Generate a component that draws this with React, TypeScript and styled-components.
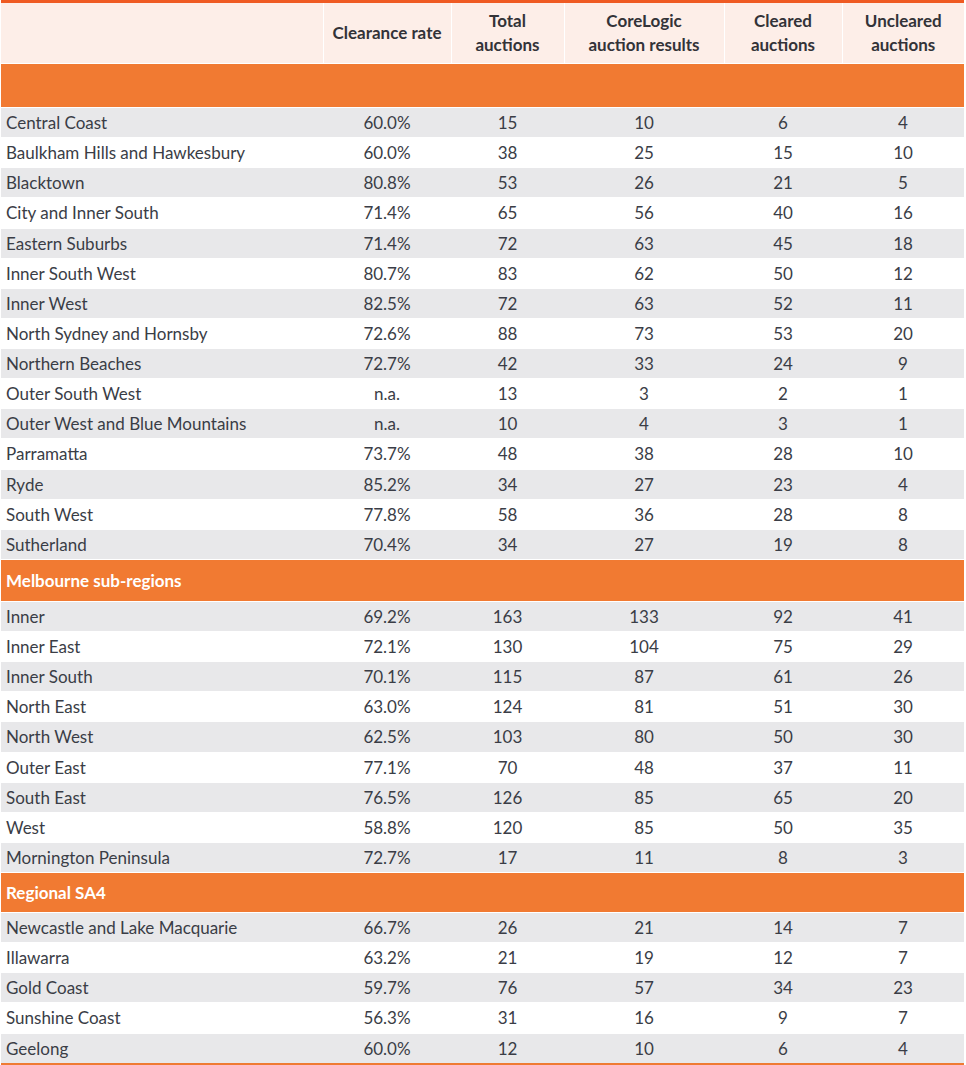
import React from "react";
import styled, { createGlobalStyle } from "styled-components";

const GlobalStyle = createGlobalStyle`
  html, body {
    margin: 0;
    padding: 0;
    background: #ffffff;
  }
  body {
    font-family: "Lato", "Liberation Sans", sans-serif;
  }
`;

type Row = [string, string, number, number, number, number];

type Section = {
  title: string;
  tall: number;
  rows: Row[];
};

const sections: Section[] = [
  {
    title: "",
    tall: 43,
    rows: [
      ["Central Coast", "60.0%", 15, 10, 6, 4],
      ["Baulkham Hills and Hawkesbury", "60.0%", 38, 25, 15, 10],
      ["Blacktown", "80.8%", 53, 26, 21, 5],
      ["City and Inner South", "71.4%", 65, 56, 40, 16],
      ["Eastern Suburbs", "71.4%", 72, 63, 45, 18],
      ["Inner South West", "80.7%", 83, 62, 50, 12],
      ["Inner West", "82.5%", 72, 63, 52, 11],
      ["North Sydney and Hornsby", "72.6%", 88, 73, 53, 20],
      ["Northern Beaches", "72.7%", 42, 33, 24, 9],
      ["Outer South West", "n.a.", 13, 3, 2, 1],
      ["Outer West and Blue Mountains", "n.a.", 10, 4, 3, 1],
      ["Parramatta", "73.7%", 48, 38, 28, 10],
      ["Ryde", "85.2%", 34, 27, 23, 4],
      ["South West", "77.8%", 58, 36, 28, 8],
      ["Sutherland", "70.4%", 34, 27, 19, 8],
    ],
  },
  {
    title: "Melbourne sub-regions",
    tall: 41,
    rows: [
      ["Inner", "69.2%", 163, 133, 92, 41],
      ["Inner East", "72.1%", 130, 104, 75, 29],
      ["Inner South", "70.1%", 115, 87, 61, 26],
      ["North East", "63.0%", 124, 81, 51, 30],
      ["North West", "62.5%", 103, 80, 50, 30],
      ["Outer East", "77.1%", 70, 48, 37, 11],
      ["South East", "76.5%", 126, 85, 65, 20],
      ["West", "58.8%", 120, 85, 50, 35],
      ["Mornington Peninsula", "72.7%", 17, 11, 8, 3],
    ],
  },
  {
    title: "Regional SA4",
    tall: 39,
    rows: [
      ["Newcastle and Lake Macquarie", "66.7%", 26, 21, 14, 7],
      ["Illawarra", "63.2%", 21, 19, 12, 7],
      ["Gold Coast", "59.7%", 76, 57, 34, 23],
      ["Sunshine Coast", "56.3%", 31, 16, 9, 7],
      ["Geelong", "60.0%", 12, 10, 6, 4],
    ],
  },
];

const Wrap = styled.div`
  width: 963px;
  padding-left: 1px;
`;

const Table = styled.table`
  width: 100%;
  border-collapse: collapse;
  table-layout: fixed;
  border-top: 3px solid #ef5a22;
  border-bottom: 3px solid #ef7b33;
  font-size: 17px;
  color: #3a3d46;
`;

const HeadCell = styled.th`
  background: #fdeee8;
  font-weight: 700;
  color: #333338;
  text-align: center;
  vertical-align: middle;
  line-height: 24px;
  height: 60px;
  padding: 0 2px;
  border-left: 1px solid #ffffff;
  white-space: nowrap;
  &:first-child {
    border-left: none;
  }
`;

const SectionCell = styled.td<{ $tall: number }>`
  background: #f17a32;
  color: #ffffff;
  font-weight: 700;
  height: ${(p) => p.$tall}px;
  padding: 0 5px;
  border-top: 1px solid #ffffff;
  border-bottom: 1px solid #ffffff;
`;

const DataRow = styled.tr<{ $shade: boolean }>`
  background: ${(p) => (p.$shade ? "#e8e8ea" : "#ffffff")};
`;

const Cell = styled.td<{ $label?: boolean }>`
  height: 29.13px;
  padding: 0 ${(p) => (p.$label ? "5px" : "2px")};
  text-align: ${(p) => (p.$label ? "left" : "center")};
  border-bottom: 1px solid #ffffff;
  white-space: nowrap;
`;

const widths = [322, 128, 113, 160, 118, 122];
const heads: string[][] = [
  [],
  ["Clearance rate"],
  ["Total", "auctions"],
  ["CoreLogic", "auction results"],
  ["Cleared", "auctions"],
  ["Uncleared", "auctions"],
];

export default function App() {
  return (
    <>
      <GlobalStyle />
      <Wrap>
        <Table>
          <colgroup>
            {widths.map((w, i) => (
              <col key={i} style={{ width: w }} />
            ))}
          </colgroup>
          <thead>
            <tr>
              {heads.map((lines, i) => (
                <HeadCell key={i}>
                  {lines.map((l, li) => (
                    <React.Fragment key={li}>
                      {li > 0 && <br />}
                      {l}
                    </React.Fragment>
                  ))}
                </HeadCell>
              ))}
            </tr>
          </thead>
          <tbody>
            {sections.map((s, si) => (
              <React.Fragment key={si}>
                <tr>
                  <SectionCell colSpan={6} $tall={s.tall}>
                    {s.title}
                  </SectionCell>
                </tr>
                {s.rows.map((r, ri) => (
                  <DataRow key={ri} $shade={ri % 2 === 0}>
                    {r.map((v, ci) => (
                      <Cell key={ci} $label={ci === 0}>
                        {v}
                      </Cell>
                    ))}
                  </DataRow>
                ))}
              </React.Fragment>
            ))}
          </tbody>
        </Table>
      </Wrap>
    </>
  );
}
